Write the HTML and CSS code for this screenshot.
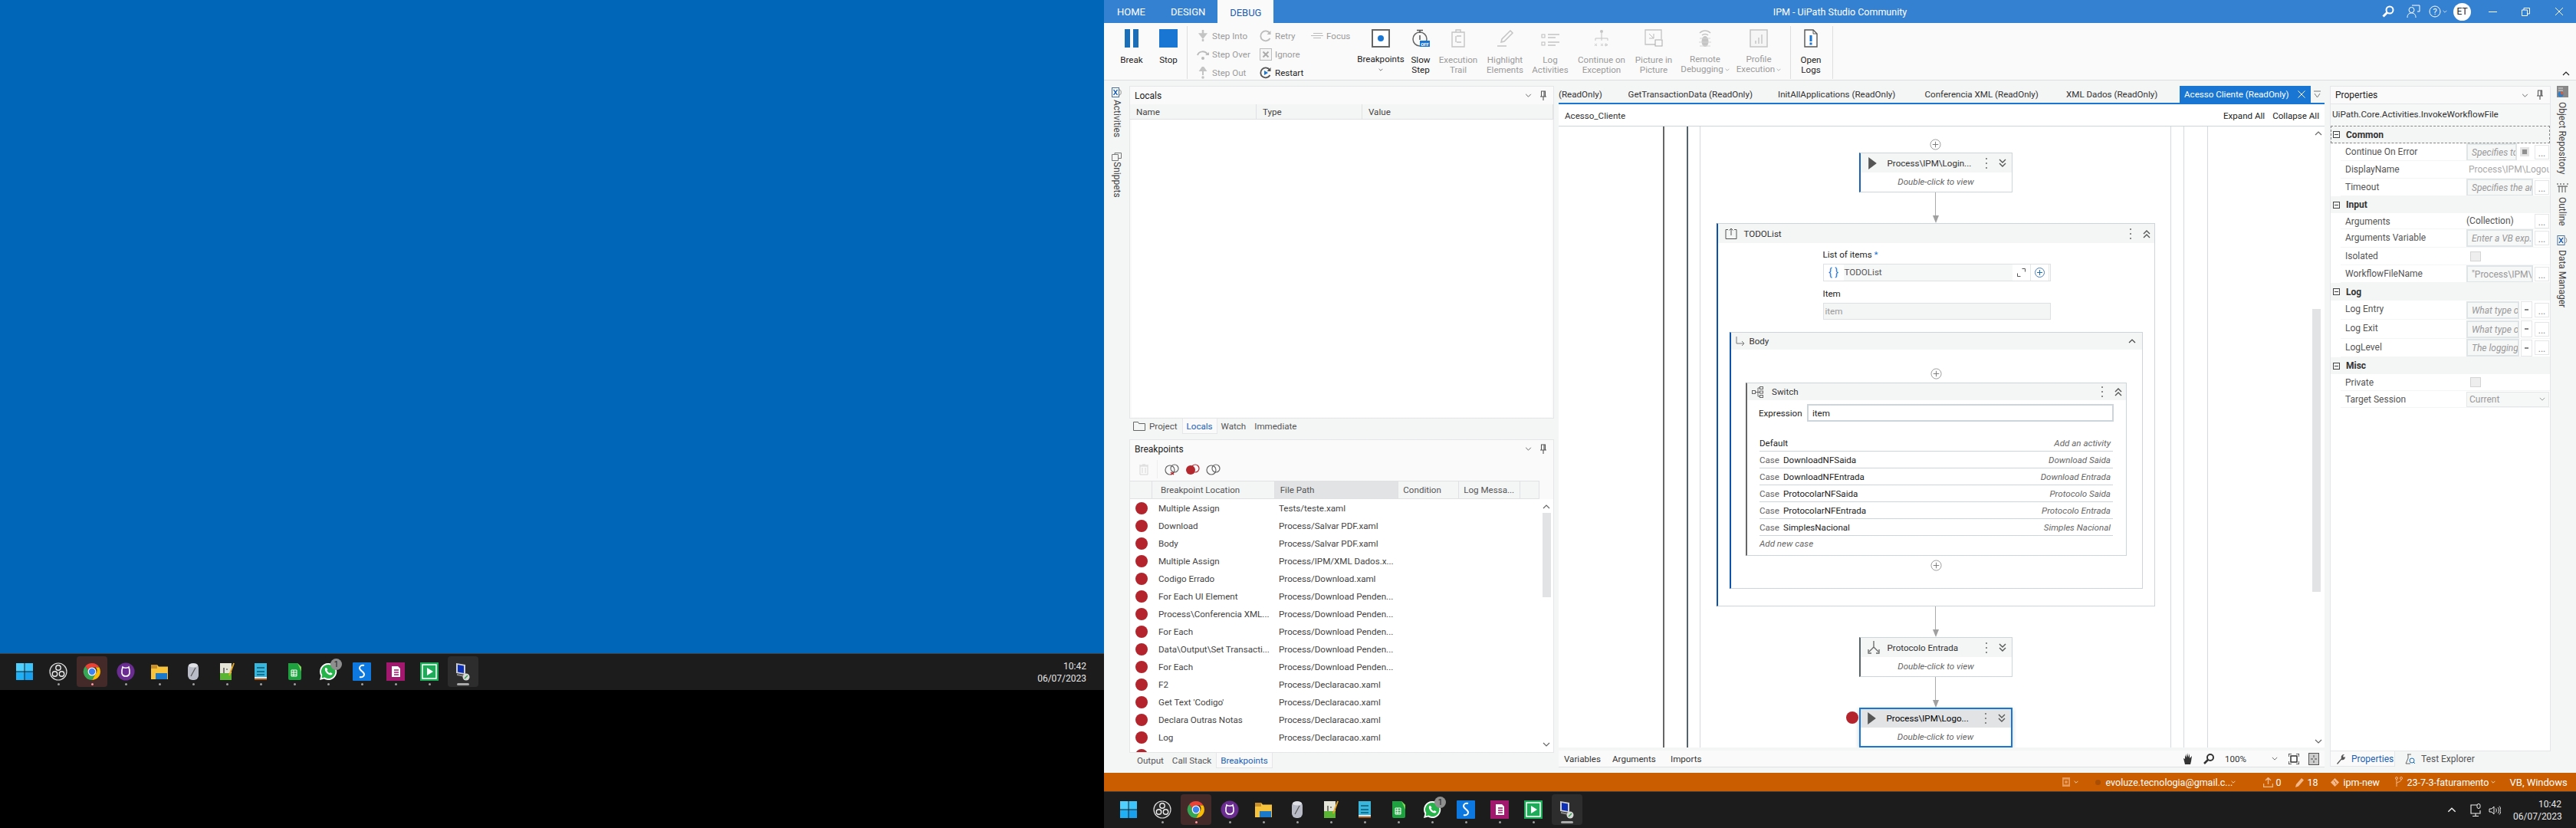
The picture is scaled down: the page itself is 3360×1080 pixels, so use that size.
FILE: index.html
```html
<!DOCTYPE html>
<html lang="en">
  <head>
    <meta charset="UTF-8" />
    <title>IPM - UiPath Studio Community</title>
    <link rel="stylesheet" href="styles.css">
  </head>
  <body>
    <svg class="defs" width="0" height="0">
      <symbol id="t-start" viewBox="0 0 24 24"><rect x="1" y="1" width="10.5" height="10.5" fill="#4fd0ff"/><rect x="12.5" y="1" width="10.5" height="10.5" fill="#3cc4fb"/><rect x="1" y="12.5" width="10.5" height="10.5" fill="#1fb0f5"/><rect x="12.5" y="12.5" width="10.5" height="10.5" fill="#18a0ee"/></symbol>
      <symbol id="t-obs" viewBox="0 0 24 24"><circle cx="12" cy="12" r="11" fill="#2a2a2a" stroke="#ddd" stroke-width="1.2"/><circle cx="12" cy="7" r="3.2" fill="none" stroke="#eee" stroke-width="1.4"/><circle cx="7.5" cy="15" r="3.2" fill="none" stroke="#eee" stroke-width="1.4"/><circle cx="16.5" cy="15" r="3.2" fill="none" stroke="#eee" stroke-width="1.4"/></symbol>
      <symbol id="t-chrome" viewBox="0 0 24 24"><path d="M12 1a11 11 0 0 1 9.5 5.5H12a5.5 5.5 0 0 0-5.2 3.7L3.3 5A11 11 0 0 1 12 1z" fill="#ea4335"/><path d="M21.5 6.5A11 11 0 0 1 12 23l4.7-8.2a5.5 5.5 0 0 0 0-8.3z" fill="#fbbc04"/><path d="M3.3 5a11 11 0 0 0 8.7 18l4.7-8.2a5.5 5.5 0 0 1-9.9-4.6z" fill="#34a853"/><circle cx="12" cy="12" r="5.5" fill="#fff"/><circle cx="12" cy="12" r="4.2" fill="#3f83ef"/></symbol>
      <symbol id="t-github" viewBox="0 0 24 24"><circle cx="12" cy="12" r="11.5" fill="#6b2c91"/><path d="M8 6c-1 3-1.500 5-1 8 .5 3 2.500 4 5 4s4.500-1 5-4c.5-3 0-5-1-8-1 1-2 1.200-4 1.200S9 7 8 6z" fill="none" stroke="#fff" stroke-width="1.6"/></symbol>
      <symbol id="t-folder" viewBox="0 0 24 24"><path d="M1 3h8l2 2.500h12V22H1z" fill="#f8c33c"/><path d="M1 3h8v5H1z" fill="#c9902a"/><rect x="7" y="14" width="15" height="8" fill="#1b79c9"/></symbol>
      <symbol id="t-disk" viewBox="0 0 24 24"><rect x="5" y="1" width="14" height="22" rx="6" fill="#b9bcc6"/><ellipse cx="12" cy="4" rx="6" ry="2.500" fill="#dfe1e6"/><path d="M9 18l6-11" stroke="#555" stroke-width="1.2"/></symbol>
      <symbol id="t-note" viewBox="0 0 24 24"><rect x="3" y="1" width="15" height="22" fill="#e6e6d8"/><rect x="3" y="14" width="15" height="9" fill="#5bb534"/><path d="M21 1l-6 16" stroke="#e6a621" stroke-width="2"/><path d="M8 7v7M11 9h2" stroke="#333" stroke-width="1.200"/></symbol>
      <symbol id="t-pad" viewBox="0 0 24 24"><rect x="4" y="1" width="16" height="22" fill="#3ab5dc"/><rect x="4" y="19" width="16" height="2" fill="#e7e7e7"/><rect x="4" y="21" width="16" height="2" fill="#a65718"/><path d="M7 7h10M7 12h10M7 16h10" stroke="#16708f" stroke-width="2"/></symbol>
      <symbol id="t-calc" viewBox="0 0 24 24"><path d="M4 1h12l5 5v15a2 2 0 0 1-2 2H6a2 2 0 0 1-2-2z" fill="#1ea13f"/><path d="M16 1l5 5v6z" fill="#7ed957"/><path d="M8 10h7v8H8zM8 13h7M8 16h7M11 10v8" stroke="#fff" fill="none"/></symbol>
      <symbol id="t-whats" viewBox="0 0 24 24"><path d="M12 1a11 11 0 0 0-9.500 16.500L1 23l5.700-1.500A11 11 0 1 0 12 1z" fill="#fff"/><path d="M12 3a9 9 0 0 0-7.700 13.600L3.500 20.500l4-1A9 9 0 1 0 12 3z" fill="#25b34a"/><path d="M8.500 7c-1 1-1 3 .5 5.500S13.500 16.500 15.500 16.500c1 0 2-1 2-2l-2.500-1.500-1 1c-1.500-.5-3-2.200-3.500-3.500l1-1L10 7z" fill="#fff"/></symbol>
      <symbol id="t-sync" viewBox="0 0 24 24"><rect x="0" y="0" width="24" height="24" rx="1" fill="#0d79e0"/><path d="M15 4c-3-1-6 .5-6 3.500 0 3 6 5 6 8 0 3-3 4.500-6 3.500" fill="none" stroke="#fff" stroke-width="2"/></symbol>
      <symbol id="t-doc" viewBox="0 0 24 24"><rect x="0" y="0" width="24" height="24" fill="#a3186f"/><path d="M7 5h8l3 3v11H7z" fill="#fff"/><path d="M10 10h6M10 13h6M10 16h6" stroke="#a3186f" stroke-width="1.500"/></symbol>
      <symbol id="t-play" viewBox="0 0 24 24"><rect x="0" y="0" width="24" height="24" fill="#1faa59"/><rect x="3" y="3" width="18" height="18" fill="none" stroke="#fff" stroke-width="1.500"/><path d="M9 7l8 5-8 5z" fill="#fff"/></symbol>
      <symbol id="t-pc" viewBox="0 0 24 24"><path d="M3 1l12 2v13L3 14z" fill="#cfcfcf"/><path d="M5 3l8 1.500v9.500l-8-1.500z" fill="#0c2fb8"/><path d="M4 15l10 2v2L4 17z" fill="#888"/><circle cx="16" cy="19" r="4.500" fill="#d9d9d9"/><path d="M14 21l4-4" stroke="#2e9b45" stroke-width="1.500"/></symbol>
      <symbol id="chev-d" viewBox="0 0 10 6"><path d="M1 1l4 4 4-4" fill="none" stroke="currentColor" stroke-width="1.200"/></symbol>
      <symbol id="chev-u" viewBox="0 0 10 6"><path d="M1 5l4-4 4 4" fill="none" stroke="currentColor" stroke-width="1.200"/></symbol>
      <symbol id="pin" viewBox="0 0 10 14"><path d="M2.500 1h5v7h-5zM1 8h8M5 8v5M6 1v7" fill="none" stroke="#555" stroke-width="1.100"/></symbol>
      <symbol id="plus-c" viewBox="0 0 16 16"><circle cx="8" cy="8" r="7" fill="#fff" stroke="#9a9a9a"/><path d="M8 4v8M4 8h8" stroke="#777"/></symbol>
      <symbol id="dbl-d" viewBox="0 0 12 14"><path d="M2 2l4 4 4-4M2 7l4 4 4-4" fill="none" stroke="#555" stroke-width="1.400"/></symbol>
      <symbol id="dbl-u" viewBox="0 0 12 14"><path d="M2 7l4-4 4 4M2 12l4-4 4 4" fill="none" stroke="#555" stroke-width="1.400"/></symbol>
      <symbol id="dots" viewBox="0 0 4 16"><path d="M2 1v2M2 7v2M2 13v2" stroke="#666" stroke-width="1.500"/></symbol>
      <symbol id="invoke" viewBox="0 0 14 18"><path d="M1 0l12 9-12 9z" fill="#555"/></symbol>
    </svg>

    <!-- monitor 1 -->
    <div class="monitor-left">
      <div class="wallpaper"></div>
      <div class="taskbar">
        <div class="tb-item"><svg class="tb-icon"><use href="#t-start"/></svg></div>
        <div class="tb-item on"><svg class="tb-icon"><use href="#t-obs"/></svg></div>
        <div class="tb-item on chrome"><svg class="tb-icon"><use href="#t-chrome"/></svg></div>
        <div class="tb-item on"><svg class="tb-icon"><use href="#t-github"/></svg></div>
        <div class="tb-item on"><svg class="tb-icon"><use href="#t-folder"/></svg></div>
        <div class="tb-item on"><svg class="tb-icon"><use href="#t-disk"/></svg></div>
        <div class="tb-item on"><svg class="tb-icon"><use href="#t-note"/></svg></div>
        <div class="tb-item on"><svg class="tb-icon"><use href="#t-pad"/></svg></div>
        <div class="tb-item on"><svg class="tb-icon"><use href="#t-calc"/></svg></div>
        <div class="tb-item on"><svg class="tb-icon"><use href="#t-whats"/></svg><span class="tb-badge">1</span></div>
        <div class="tb-item on"><svg class="tb-icon"><use href="#t-sync"/></svg></div>
        <div class="tb-item on"><svg class="tb-icon"><use href="#t-doc"/></svg></div>
        <div class="tb-item on"><svg class="tb-icon"><use href="#t-play"/></svg></div>
        <div class="tb-item on current"><svg class="tb-icon"><use href="#t-pc"/></svg></div>
        <div class="tb-clock left-clock"><div>10:42</div><div>06/07/2023</div></div>
      </div>
      <div class="black"></div>
    </div>

    <!-- monitor 2 -->
    <div class="monitor-right">
      <div class="titlebar">
        <div class="menu">
          <span class="menu-tab home">HOME</span>
          <span class="menu-tab design">DESIGN</span>
          <span class="menu-tab active">DEBUG</span>
        </div>
        <div class="win-title">IPM - UiPath Studio Community</div>
        <div class="win-actions">
          <svg class="wa search" width="18" height="18" viewBox="0 0 18 18"><circle cx="11" cy="7" r="4.500" fill="none" stroke="#fff" stroke-width="2"/><path d="M7.500 10.500L2.500 15.500" stroke="#fff" stroke-width="3"/></svg>
          <svg class="wa person" width="18" height="18" viewBox="0 0 18 18"><circle cx="6.500" cy="7" r="3.500" fill="none" stroke="#fff"/><path d="M1 17c0-4 2-6 5.500-6s5.500 2 5.500 6M7 1h10v8h-3" fill="none" stroke="#fff"/></svg>
          <svg class="wa help" width="16" height="16" viewBox="0 0 16 16"><circle cx="8" cy="8" r="7" fill="none" stroke="#fff"/><text x="8" y="12" class="help-q">?</text></svg>
          <svg class="wa help-chev" width="6" height="4"><use href="#chev-d"/></svg>
          <span class="avatar">ET</span>
          <svg class="wa min" width="11" height="1" viewBox="0 0 11 1"><rect width="11" height="1" fill="#fff"/></svg>
          <svg class="wa restore" width="11" height="11" viewBox="0 0 11 11"><path d="M.5 3h7v7.500h-7zM3 3V.5h7.500V8H8" fill="none" stroke="#fff"/></svg>
          <svg class="wa close" width="12" height="12" viewBox="0 0 12 12"><path d="M1 1l10 10M11 1L1 11" stroke="#fff"/></svg>
        </div>
      </div>

      <div class="ribbon">
        <div class="rb-big w48"><span class="rb-ico"><svg width="18" height="24" viewBox="0 0 18 24"><rect width="7" height="24" fill="#1a6fb8"/><rect x="11" width="7" height="24" fill="#1a6fb8"/></svg></span><span class="rb-lbl">Break</span></div>
        <div class="rb-big w48"><span class="rb-ico"><svg width="24" height="24"><rect width="24" height="24" fill="#1976d2"/></svg></span><span class="rb-lbl">Stop</span></div>
        <div class="rb-sep"></div>
        <div class="rb-col c1">
          <div class="rb-small off"><svg width="16" height="16" viewBox="0 0 16 16"><path d="M8 0v8M4.500 5.500L8 10l3.500-4.500zM8 12v3" stroke="#c4c4c4" stroke-width="2.500" fill="#c4c4c4"/></svg>Step Into</div>
          <div class="rb-small off"><svg width="16" height="16" viewBox="0 0 16 16"><path d="M1 9c2-6 10-6 13-1" fill="none" stroke="#bbb" stroke-width="2"/><path d="M11 9h5V5z" fill="#bbb"/><circle cx="8" cy="13" r="2" fill="#bbb"/></svg>Step Over</div>
          <div class="rb-small off"><svg width="16" height="16" viewBox="0 0 16 16"><path d="M8 11V4M4.500 5L8 0l3.500 5z" stroke="#c4c4c4" stroke-width="2" fill="#c4c4c4"/><circle cx="8" cy="14" r="1.800" fill="#c4c4c4"/></svg>Step Out</div>
        </div>
        <div class="rb-col c2">
          <div class="rb-small off"><svg width="16" height="16" viewBox="0 0 16 16"><path d="M13.500 11A6.500 6.500 0 1 1 13 4" fill="none" stroke="#bbb" stroke-width="1.800"/><path d="M14.500 1v5h-5z" fill="#bbb"/></svg>Retry</div>
          <div class="rb-small off"><svg width="16" height="16" viewBox="0 0 16 16"><rect x=".5" y=".5" width="15" height="15" fill="#f5f5f5" stroke="#bbb"/><path d="M4.500 4.500l7 7M11.500 4.500l-7 7" stroke="#aaa" stroke-width="2"/></svg>Ignore</div>
          <div class="rb-small"><svg width="16" height="16" viewBox="0 0 16 16"><path d="M13.500 11A6.500 6.500 0 1 1 13 4" fill="none" stroke="#555" stroke-width="1.800"/><path d="M14.500 1v5h-5z" fill="#555"/><path d="M6 5l5 3-5 3z" fill="#1976d2"/></svg>Restart</div>
        </div>
        <div class="rb-col c3">
          <div class="rb-small off"><svg width="16" height="8" viewBox="0 0 16 8"><path d="M3 .5h12M0 3.500h16M3 6.500h10" stroke="#bbb"/></svg>Focus</div>
        </div>
        <div class="rb-big w52 lbl-high"><span class="rb-ico"><svg width="24" height="24"><rect x="1" y="1" width="22" height="22" fill="#fff" stroke="#666" stroke-width="2"/><circle cx="12" cy="12" r="4" fill="#1976d2"/></svg></span><span class="rb-lbl">Breakpoints</span><svg class="rb-chev" width="6" height="4"><use href="#chev-d"/></svg></div>
        <div class="rb-big w52"><span class="rb-ico"><svg width="24" height="24" viewBox="0 0 24 24"><circle cx="11" cy="13" r="9" fill="none" stroke="#666" stroke-width="1.500"/><path d="M7 1.500h8M11 2v3M11 8v6" stroke="#555" stroke-width="1.500"/><rect x="11" y="15" width="13" height="8" fill="#1976d2"/><text x="17.500" y="21.500" class="off-txt">OFF</text></svg></span><span class="rb-lbl">Slow<br />Step</span></div>
        <div class="rb-big w46 off"><span class="rb-ico"><svg width="20" height="24" viewBox="0 0 20 24"><path d="M2 4h16v19H2zM7 4V1h6v3M8 9h6M8 17h6M7 9v8" fill="none" stroke="#c4c4c4" stroke-width="1.400"/></svg></span><span class="rb-lbl">Execution<br />Trail</span></div>
        <div class="rb-big w76 off"><span class="rb-ico"><svg width="24" height="24" viewBox="0 0 24 24"><path d="M19 2l3 3-11 11-4 1 1-4zM2 22h12" fill="none" stroke="#c4c4c4" stroke-width="1.500"/></svg></span><span class="rb-lbl">Highlight<br />Elements</span></div>
        <div class="rb-big w42 off"><span class="rb-ico"><svg width="24" height="24" viewBox="0 0 24 24"><path d="M9 7h15M9 11h10M9 17h15M9 21h10" stroke="#c4c4c4" stroke-width="1.300"/><rect x="1" y="7" width="4" height="4" fill="none" stroke="#bbb"/><rect x="1" y="17" width="4" height="4" fill="none" stroke="#bbb"/></svg></span><span class="rb-lbl">Log<br />Activities</span></div>
        <div class="rb-big w92 off"><span class="rb-ico"><svg width="20" height="24" viewBox="0 0 20 24"><circle cx="10" cy="3" r="2" fill="#c4c4c4"/><path d="M10 5v7M2 15v-3h16v3M10 12v3" fill="none" stroke="#c4c4c4"/><path d="M1 19l3 3M4 19l-3 3M9 19l3 3M12 19l-3 3M15 19v3l3-1.500z" stroke="#c4c4c4" fill="none"/></svg></span><span class="rb-lbl">Continue on<br />Exception</span></div>
        <div class="rb-big w44 off"><span class="rb-ico"><svg width="24" height="24" viewBox="0 0 24 24"><path d="M14 20H1V1h21v12" fill="none" stroke="#c4c4c4" stroke-width="1.300"/><rect x="14" y="14" width="9" height="8" fill="none" stroke="#aaa"/><path d="M7 6l6 6M7 12h6V6" transform="translate(-1 0)" fill="none" stroke="#bbb"/></svg></span><span class="rb-lbl">Picture in<br />Picture</span></div>
        <div class="rb-big w90 off lbl-high"><span class="rb-ico"><svg width="20" height="24" viewBox="0 0 20 24"><path d="M3 5c4-4 10-4 14 0M6 8c2-2 6-2 8 0" fill="none" stroke="#c4c4c4" stroke-width="1.500"/><ellipse cx="10" cy="16" rx="4.500" ry="7" fill="#c4c4c4"/><path d="M3 12h14M2 17h16M3 22h14" stroke="#d4d4d4"/></svg></span><span class="rb-lbl">Remote<br />Debugging<svg class="rb-chev-in" width="6" height="4"><use href="#chev-d"/></svg></span></div>
        <div class="rb-big w50 off lbl-high"><span class="rb-ico"><svg width="24" height="24" viewBox="0 0 24 24"><rect x="1" y="1" width="22" height="22" fill="#f5f5f5" stroke="#c4c4c4" stroke-width="1.500"/><path d="M8 19v-4M12 19V11M16 19V7" stroke="#c4c4c4" stroke-width="1.400"/></svg></span><span class="rb-lbl">Profile<br />Execution<svg class="rb-chev-in" width="6" height="4"><use href="#chev-d"/></svg></span></div>
        <div class="rb-sep s2"></div>
        <div class="rb-big w52"><span class="rb-ico"><svg width="18" height="24" viewBox="0 0 18 24"><path d="M1 1h11l5 5v17H1z" fill="#fff" stroke="#555" stroke-width="1.400"/><path d="M12 1v5h5" fill="none" stroke="#555"/><rect x="7.500" y="8" width="3" height="8" fill="#1976d2"/><rect x="7.500" y="17.500" width="3" height="3" fill="#1976d2"/></svg></span><span class="rb-lbl">Open<br />Logs</span></div>
        <div class="rb-sep s3"></div>
        <svg class="rb-collapse" width="10" height="6"><use href="#chev-u"/></svg>
      </div>

      <div class="workspace">
        <div class="side-strip">
          <svg class="side-ico" width="14" height="13" viewBox="0 0 14 13"><rect x=".5" y=".5" width="9" height="12" fill="#fff" stroke="#4a6f96"/><path d="M2.500 3l5 7M7.500 3l-5 7" stroke="#1a5fb4" stroke-width="1.300"/><path d="M10 3c3 0 3 7 0 7" fill="none" stroke="#888"/></svg>
          <span class="side-txt activities">Activities</span>
          <svg class="snip-ico" width="13" height="11" viewBox="0 0 13 11"><path d="M.5 2.500h8v8h-8zM4 2.500V.5h8.500v7h-4" fill="none" stroke="#777"/></svg>
          <span class="side-txt snippets">Snippets</span>
        </div>

        <div class="col-left">
          <div class="panel locals">
            <div class="panel-head"><span class="panel-name">Locals</span><span class="grip"></span><svg class="ph-chev" width="9" height="5"><use href="#chev-d"/></svg><svg class="ph-pin" width="10" height="14"><use href="#pin"/></svg></div>
            <div class="locals-cols"><span class="lc-name">Name</span><span class="lc-type">Type</span><span class="lc-value">Value</span></div>
            <div class="locals-body"></div>
          </div>
          <div class="bottom-tabs">
            <svg class="proj-ico" width="16" height="12" viewBox="0 0 16 12"><path d="M.5 11.500V.5h6l1 2h8v9z" fill="none" stroke="#666"/></svg>
            <span class="bt">Project</span>
            <span class="bt active">Locals</span>
            <span class="bt">Watch</span>
            <span class="bt">Immediate</span>
          </div>
          <div class="panel breakpoints">
            <div class="panel-head"><span class="panel-name">Breakpoints</span><span class="grip"></span><svg class="ph-chev" width="9" height="5"><use href="#chev-d"/></svg><svg class="ph-pin" width="10" height="14"><use href="#pin"/></svg></div>
            <div class="bp-tools">
              <svg width="12" height="15" viewBox="0 0 12 15"><path d="M1 3h10v11H1zM0 2h12M4 1h4M4 5v7M8 5v7" fill="none" stroke="#d6d6d6"/></svg>
              <span class="bp-tool-sep"></span>
              <svg width="19" height="15" viewBox="0 0 19 15"><circle cx="7" cy="8" r="6" fill="none" stroke="#666" stroke-width="1.200"/><circle cx="13" cy="6" r="5" fill="none" stroke="#666" stroke-width="1.200"/><path d="M8 11l4 3M12 11l-4 3" stroke="#c0272d" stroke-width="1.500"/></svg>
              <svg width="19" height="15" viewBox="0 0 19 15"><circle cx="13" cy="6" r="5" fill="none" stroke="#b3272d" stroke-width="1.200"/><circle cx="7" cy="8" r="6" fill="#b3272d"/></svg>
              <svg width="19" height="15" viewBox="0 0 19 15"><circle cx="7" cy="8" r="6" fill="none" stroke="#666" stroke-width="1.200"/><circle cx="13" cy="6" r="5" fill="none" stroke="#666" stroke-width="1.200"/></svg>
            </div>
            <div class="bp-head">
              <span class="bh b0"></span>
              <span class="bh b1">Breakpoint Location</span>
              <span class="bh b2 sorted">File Path</span>
              <span class="bh b3">Condition</span>
              <span class="bh b4">Log Messa...</span>
              <span class="bh b5"></span>
            </div>
            <div class="bp-body">
              <div class="bp-rows">
                <div class="bp-row"><i></i><span class="bp-loc">Multiple Assign</span><span>Tests/teste.xaml</span></div>
                <div class="bp-row"><i></i><span class="bp-loc">Download</span><span>Process/Salvar PDF.xaml</span></div>
                <div class="bp-row"><i></i><span class="bp-loc">Body</span><span>Process/Salvar PDF.xaml</span></div>
                <div class="bp-row"><i></i><span class="bp-loc">Multiple Assign</span><span>Process/IPM/XML Dados.x...</span></div>
                <div class="bp-row"><i></i><span class="bp-loc">Codigo Errado</span><span>Process/Download.xaml</span></div>
                <div class="bp-row"><i></i><span class="bp-loc">For Each UI Element</span><span>Process/Download Penden...</span></div>
                <div class="bp-row"><i></i><span class="bp-loc">Process\Conferencia XML...</span><span>Process/Download Penden...</span></div>
                <div class="bp-row"><i></i><span class="bp-loc">For Each</span><span>Process/Download Penden...</span></div>
                <div class="bp-row"><i></i><span class="bp-loc">Data\Output\Set Transacti...</span><span>Process/Download Penden...</span></div>
                <div class="bp-row"><i></i><span class="bp-loc">For Each</span><span>Process/Download Penden...</span></div>
                <div class="bp-row"><i></i><span class="bp-loc">F2</span><span>Process/Declaracao.xaml</span></div>
                <div class="bp-row"><i></i><span class="bp-loc">Get Text 'Codigo'</span><span>Process/Declaracao.xaml</span></div>
                <div class="bp-row"><i></i><span class="bp-loc">Declara Outras Notas</span><span>Process/Declaracao.xaml</span></div>
                <div class="bp-row"><i></i><span class="bp-loc">Log</span><span>Process/Declaracao.xaml</span></div>
                <div class="bp-row"><i></i><span class="bp-loc">Log</span><span>Process/Declaracao.xaml</span></div>
              </div>
              <div class="bp-scroll">
                <svg width="10" height="6"><use href="#chev-u"/></svg>
                <div class="bp-thumb"></div>
                <svg class="bp-down" width="10" height="6"><use href="#chev-d"/></svg>
              </div>
            </div>
          </div>
          <div class="bottom-tabs lower">
            <span class="bt">Output</span>
            <span class="bt">Call Stack</span>
            <span class="bt active">Breakpoints</span>
          </div>
        </div>

        <div class="col-center">
          <div class="doc-tabs">
            <span class="doc-tab t0">(ReadOnly)</span>
            <span class="doc-tab t1">GetTransactionData (ReadOnly)</span>
            <span class="doc-tab t2">InitAllApplications (ReadOnly)</span>
            <span class="doc-tab t3">Conferencia XML (ReadOnly)</span>
            <span class="doc-tab t4">XML Dados (ReadOnly)</span>
            <span class="doc-tab active">Acesso Cliente (ReadOnly)<svg width="10" height="10" viewBox="0 0 10 10"><path d="M.5.500l9 9M9.500.500l-9 9" stroke="#fff"/></svg></span>
            <svg class="doc-more" width="9" height="11" viewBox="0 0 9 11"><path d="M0 1h9M1 4l3.500 5L8 4" fill="none" stroke="#777"/></svg>
          </div>
          <div class="crumb">
            <span>Acesso_Cliente</span>
            <span class="crumb-right"><span>Expand All</span><span>Collapse All</span></span>
          </div>
          <div class="canvas">
            <div class="canvas-view">
              <div class="scope-a"><div class="scope-b"><div class="scope-c">
                <svg class="plus first" width="15" height="15"><use href="#plus-c"/></svg>
                <div class="node invoke-node">
                  <div class="node-head"><svg class="n-ico" width="13" height="16"><use href="#invoke"/></svg><span class="n-title">Process\IPM\Login...</span><svg class="n-dots" width="4" height="16"><use href="#dots"/></svg><svg class="n-dbl" width="12" height="14"><use href="#dbl-d"/></svg></div>
                  <div class="node-foot">Double-click to view</div>
                </div>
                <div class="arrow"></div>
                <div class="todo">
                  <div class="block-head"><svg class="bh-ico" width="16" height="14" viewBox="0 0 16 14"><path d="M4 1.500H1v12h14v-12h-3" fill="none" stroke="#555"/><path d="M8 9V0M5.500 2.500L8 0l2.500 2.500" fill="none" stroke="#555"/></svg><span class="n-title">TODOList</span><svg class="n-dots" width="4" height="16"><use href="#dots"/></svg><svg class="n-dbl" width="12" height="14"><use href="#dbl-u"/></svg></div>
                  <div class="todo-form">
                    <div class="f-label first">List of items <b>*</b></div>
                    <div class="f-input list">
                      <span class="f-brace">{ }</span>
                      <span class="f-value">TODOList</span>
                      <span class="f-btn"><svg width="11" height="11" viewBox="0 0 11 11"><path d="M6.500.500h4v4M.500 6.500v4h4" fill="none" stroke="#555"/></svg></span>
                      <span class="f-btn"><svg width="13" height="13" viewBox="0 0 13 13"><circle cx="6.500" cy="6.500" r="6" fill="none" stroke="#4a7fb8"/><path d="M6.500 3v7M3 6.500h7" stroke="#1a6fb8"/></svg></span>
                    </div>
                    <div class="f-label">Item</div>
                    <div class="f-input item">item</div>
                  </div>
                  <div class="body-block">
                    <div class="block-head short"><svg class="body-ico" width="12" height="13" viewBox="0 0 12 13"><path d="M1 0v9h10M8 6l3 3-3 3" fill="none" stroke="#777"/></svg><span class="n-title">Body</span><svg class="n-dbl single" width="10" height="6"><use href="#chev-u"/></svg></div>
                    <svg class="plus mid" width="15" height="15"><use href="#plus-c"/></svg>
                    <div class="switch">
                      <div class="block-head"><svg class="sw-ico" width="16" height="15" viewBox="0 0 16 15"><rect x=".5" y="5.500" width="4" height="4" fill="none" stroke="#666"/><path d="M5 7.500h3M8 2v11M8 2h2M8 7.500h2M8 13h2" stroke="#666" fill="none"/><rect x="10.500" y=".5" width="4" height="3" fill="none" stroke="#666"/><rect x="10.500" y="6" width="4" height="3" fill="none" stroke="#666"/><rect x="10.500" y="11.500" width="4" height="3" fill="none" stroke="#666"/></svg><span class="n-title">Switch</span><svg class="n-dots" width="4" height="16"><use href="#dots"/></svg><svg class="n-dbl" width="12" height="14"><use href="#dbl-u"/></svg></div>
                      <div class="sw-expr"><span>Expression</span><div class="sw-input">item</div></div>
                      <div class="sw-rows">
                        <div class="sw-row"><span class="sw-default">Default</span><em>Add an activity</em></div>
                        <div class="sw-row"><span class="sw-case">Case</span><span class="sw-val">DownloadNFSaida</span><em>Download Saida</em></div>
                        <div class="sw-row"><span class="sw-case">Case</span><span class="sw-val">DownloadNFEntrada</span><em>Download Entrada</em></div>
                        <div class="sw-row"><span class="sw-case">Case</span><span class="sw-val">ProtocolarNFSaida</span><em>Protocolo Saida</em></div>
                        <div class="sw-row"><span class="sw-case">Case</span><span class="sw-val">ProtocolarNFEntrada</span><em>Protocolo Entrada</em></div>
                        <div class="sw-row"><span class="sw-case">Case</span><span class="sw-val">SimplesNacional</span><em>Simples Nacional</em></div>
                        <div class="sw-add">Add new case</div>
                      </div>
                    </div>
                    <svg class="plus low" width="15" height="15"><use href="#plus-c"/></svg>
                  </div>
                </div>
                <div class="arrow"></div>
                <div class="node seq-node">
                  <div class="node-head"><svg class="n-ico" width="16" height="17" viewBox="0 0 16 17"><path d="M8 0v8M8 8L2 14M8 8l6 6M1 11v5h4M15 11v5h-4" fill="none" stroke="#666" stroke-width="1.300"/></svg><span class="n-title">Protocolo Entrada</span><svg class="n-dots" width="4" height="16"><use href="#dots"/></svg><svg class="n-dbl" width="12" height="14"><use href="#dbl-d"/></svg></div>
                  <div class="node-foot">Double-click to view</div>
                </div>
                <div class="arrow"></div>
                <div class="node selected">
                  <span class="node-bp"></span>
                  <div class="node-head"><svg class="n-ico" width="13" height="16"><use href="#invoke"/></svg><span class="n-title">Process\IPM\Logo...</span><svg class="n-dots" width="4" height="16"><use href="#dots"/></svg><svg class="n-dbl" width="12" height="14"><use href="#dbl-d"/></svg></div>
                  <div class="node-foot">Double-click to view</div>
                </div>
              </div></div></div>
            </div>
            <div class="canvas-scroll">
              <svg width="10" height="6"><use href="#chev-u"/></svg>
              <div class="canvas-thumb"></div>
              <svg class="cs-down" width="10" height="6"><use href="#chev-d"/></svg>
            </div>
          </div>
          <div class="designer-bar">
            <span class="db-tab variables">Variables</span><span class="db-tab arguments">Arguments</span><span class="db-tab imports">Imports</span>
            <svg class="db-hand" width="14" height="16" viewBox="0 0 14 16"><path d="M3 15L1 7l2 1V3l1.500 3V1L6 6V0l1.500 6 1-5 .8 6L12 4l-1 7-1 4z" fill="#333"/></svg>
            <svg class="db-zoom" width="14" height="14" viewBox="0 0 14 14"><circle cx="9" cy="5" r="4" fill="#fff" stroke="#333" stroke-width="2"/><path d="M6 8l-5 5" stroke="#333" stroke-width="2.500"/></svg>
            <span class="db-pct">100%</span>
            <svg class="db-chev" width="8" height="5"><use href="#chev-d"/></svg>
            <svg class="db-fit" width="14" height="14" viewBox="0 0 14 14"><rect x="3" y="3" width="8" height="8" fill="none" stroke="#333" stroke-width="1.500"/><path d="M0 4V0h4M10 0h4v4M14 10v4h-4M4 14H0v-4" fill="none" stroke="#333" stroke-width="1.500"/></svg>
            <svg class="db-grid" width="14" height="16" viewBox="0 0 14 16"><rect width="14" height="16" fill="#ccc"/><rect x=".5" y=".5" width="13" height="15" fill="none" stroke="#555"/><path d="M7 3v3M7 10v3M3 8h3M8 8h3" stroke="#444"/></svg>
          </div>
        </div>

        <div class="col-props">
          <div class="panel props">
            <div class="panel-head"><span class="panel-name">Properties</span><span class="grip"></span><svg class="ph-chev" width="9" height="5"><use href="#chev-d"/></svg><svg class="ph-pin" width="10" height="14"><use href="#pin"/></svg></div>
            <div class="props-type">UiPath.Core.Activities.InvokeWorkflowFile</div>
            <div class="p-cat focus"><span class="p-box"></span>Common</div>
            <div class="p-row"><span class="p-name">Continue On Error</span><span class="p-val"><span class="p-in w66">Specifies to</span><span class="p-square"></span><span class="p-dots">...</span></span></div>
            <div class="p-row"><span class="p-name">DisplayName</span><span class="p-val plain">Process\IPM\Logout</span></div>
            <div class="p-row"><span class="p-name">Timeout</span><span class="p-val"><span class="p-in w87">Specifies the ar</span><span class="p-dots">...</span></span></div>
            <div class="p-cat h22"><span class="p-box"></span>Input</div>
            <div class="p-row h21"><span class="p-name">Arguments</span><span class="p-val"><span class="p-coll">(Collection)</span><span class="p-dots">...</span></span></div>
            <div class="p-row h24"><span class="p-name">Arguments Variable</span><span class="p-val"><span class="p-in w87">Enter a VB exp.</span><span class="p-dots">...</span></span></div>
            <div class="p-row"><span class="p-name">Isolated</span><span class="p-val"><span class="p-check"></span></span></div>
            <div class="p-row"><span class="p-name">WorkflowFileName</span><span class="p-val"><span class="p-in w87 upright">"Process\IPM\l</span><span class="p-dots">...</span></span></div>
            <div class="p-cat"><span class="p-box"></span>Log</div>
            <div class="p-row h25"><span class="p-name">Log Entry</span><span class="p-val"><span class="p-in w69">What type o</span><span class="p-drop"></span><span class="p-dots">...</span></span></div>
            <div class="p-row h25"><span class="p-name">Log Exit</span><span class="p-val"><span class="p-in w69">What type o</span><span class="p-drop"></span><span class="p-dots">...</span></span></div>
            <div class="p-row h24"><span class="p-name">LogLevel</span><span class="p-val"><span class="p-in w69">The logging</span><span class="p-drop"></span><span class="p-dots">...</span></span></div>
            <div class="p-cat h22"><span class="p-box"></span>Misc</div>
            <div class="p-row h22"><span class="p-name">Private</span><span class="p-val"><span class="p-check"></span></span></div>
            <div class="p-row h22"><span class="p-name">Target Session</span><span class="p-val"><span class="p-select">Current<svg width="8" height="5"><use href="#chev-d"/></svg></span></span></div>
          </div>
          <div class="bottom-tabs lower props-tabs">
            <span class="bt active"><svg width="13" height="14" viewBox="0 0 13 14"><path d="M1 13l6-7c-1-3 1-5 4-5L9 3l1 2 2-1c0 3-2 5-5 4l-5 6z" fill="#555"/></svg>Properties</span>
            <span class="bt"><svg width="14" height="14" viewBox="0 0 14 14"><path d="M3 1h5M4 1v5L1 13h6" fill="none" stroke="#666"/><circle cx="9" cy="9" r="3" fill="none" stroke="#1a6fb8"/><path d="M11 11l2 2" stroke="#1a6fb8"/></svg>Test Explorer</span>
          </div>
        </div>

        <div class="side-strip right">
          <div class="rs-group g1">
            <svg width="15" height="15" viewBox="0 0 15 15"><rect width="15" height="15" fill="#888"/><path d="M2 3h6M2 6h6" stroke="#ddd"/><circle cx="5" cy="11" r="3.500" fill="#2d7fc9"/><path d="M5 7.500a3.500 3.500 0 0 1 3.500 3.500H5z" fill="#e05a2b"/></svg>
            <span class="side-txt">Object Repository</span>
          </div>
          <div class="rs-group g2">
            <svg width="15" height="12" viewBox="0 0 15 12"><path d="M0 1h2M4 1h2M8 1h2M13 1h2M1 4h13M3 4v8M7 4v8M11 4v8" stroke="#777" stroke-width="1.300"/></svg>
            <span class="side-txt">Outline</span>
          </div>
          <div class="rs-group g3">
            <svg width="15" height="13" viewBox="0 0 14 13"><rect x=".5" y=".5" width="9" height="12" fill="#fff" stroke="#4a6f96"/><path d="M2.500 3l5 7M7.500 3l-5 7" stroke="#1a5fb4" stroke-width="1.300"/><path d="M10 3c3 0 3 7 0 7" fill="none" stroke="#888"/></svg>
            <span class="side-txt">Data Manager</span>
          </div>
        </div>
      </div>

      <div class="statusbar">
        <svg class="sb-src" width="10" height="12" viewBox="0 0 10 12"><rect width="10" height="12" fill="#e89a5a"/><rect x="2.500" y="3.500" width="5" height="5" fill="none" stroke="#c95d00" stroke-width="1.500"/></svg>
        <svg class="sb-chev" width="6" height="4"><use href="#chev-d"/></svg>
        <span class="sb-dot"></span>
        <span class="sb-mail">evoluze.tecnologia@gmail.c...</span>
        <svg class="sb-chev" width="6" height="4"><use href="#chev-d"/></svg>
        <svg class="sb-up" width="13" height="13" viewBox="0 0 13 13"><path d="M6.500 9V1M3 4l3.500-3.500L10 4M.5 8v4.500h12V8" fill="none" stroke="#f3b98a" stroke-width="1.400"/></svg>
        <span class="sb-zero">0</span>
        <svg class="sb-pen" width="12" height="13" viewBox="0 0 12 13"><path d="M0 13l1-4 7-8 3 2.500-7 8z" fill="#f3b98a"/></svg>
        <span class="sb-count">18</span>
        <svg class="sb-git" width="11" height="11" viewBox="0 0 11 11"><path d="M5.500 0L11 5.500 5.500 11 0 5.500z" fill="#f3b98a"/><path d="M4 3l3 3v2" stroke="#c95d00" fill="none"/></svg>
        <span class="sb-repo">ipm-new</span>
        <svg class="sb-branch" width="10" height="14" viewBox="0 0 10 14"><circle cx="2" cy="2" r="1.500" fill="none" stroke="#f3b98a"/><circle cx="8" cy="2" r="1.500" fill="none" stroke="#f3b98a"/><path d="M2 4v9M8 4c0 3-6 3-6 5" fill="none" stroke="#f3b98a"/></svg>
        <span class="sb-name">23-7-3-faturamento</span>
        <svg class="sb-chev" width="6" height="4"><use href="#chev-d"/></svg>
        <span class="sb-lang">VB, Windows</span>
      </div>

      <div class="taskbar">
        <div class="tb-item"><svg class="tb-icon"><use href="#t-start"/></svg></div>
        <div class="tb-item on"><svg class="tb-icon"><use href="#t-obs"/></svg></div>
        <div class="tb-item on chrome"><svg class="tb-icon"><use href="#t-chrome"/></svg></div>
        <div class="tb-item on"><svg class="tb-icon"><use href="#t-github"/></svg></div>
        <div class="tb-item on"><svg class="tb-icon"><use href="#t-folder"/></svg></div>
        <div class="tb-item on"><svg class="tb-icon"><use href="#t-disk"/></svg></div>
        <div class="tb-item on"><svg class="tb-icon"><use href="#t-note"/></svg></div>
        <div class="tb-item on"><svg class="tb-icon"><use href="#t-pad"/></svg></div>
        <div class="tb-item on"><svg class="tb-icon"><use href="#t-calc"/></svg></div>
        <div class="tb-item on"><svg class="tb-icon"><use href="#t-whats"/></svg><span class="tb-badge">1</span></div>
        <div class="tb-item on"><svg class="tb-icon"><use href="#t-sync"/></svg></div>
        <div class="tb-item on"><svg class="tb-icon"><use href="#t-doc"/></svg></div>
        <div class="tb-item on"><svg class="tb-icon"><use href="#t-play"/></svg></div>
        <div class="tb-item on current"><svg class="tb-icon"><use href="#t-pc"/></svg></div>
        <div class="tb-tray">
          <svg class="tray-chev" width="12" height="7"><use href="#chev-u"/></svg>
          <svg class="tray-net" width="14" height="18" viewBox="0 0 14 18"><path d="M9 2H1v11h12v-4M7 13v3M3 16.500h8" fill="none" stroke="#eee" stroke-width="1.100"/><rect x="9" y=".5" width="4" height="6" rx="2" fill="none" stroke="#eee"/></svg>
          <svg class="tray-vol" width="16" height="14" viewBox="0 0 16 14"><path d="M1 5h3l3-3v10L4 9H1zM9.500 4.500c1 1.500 1 3.500 0 5M12 3c2 2 2 6 0 8M14 1.500c2.500 3 2.500 8 0 11" fill="none" stroke="#eee"/></svg>
        </div>
        <div class="tb-clock right-clock"><div>10:42</div><div>06/07/2023</div></div>
      </div>
    </div>
  </body>
</html>
```

FILE: styles.css
```css
* {
  margin: 0;
  padding: 0;
  box-sizing: border-box;
}

body {
  width: 3360px;
  height: 1080px;
  overflow: hidden;
  display: flex;
  background-color: black;
  font-family: "Roboto", "Open Sans", sans-serif;
  font-size: 11.6px;
  color: #333;
}

svg {
  flex-shrink: 0;
}

.defs {
  position: absolute;
}

/* monitores */
.monitor-left {
  width: 1440px;
  display: flex;
  flex-direction: column;
}

.wallpaper {
  height: 852px;
  background-color: #0067b8;
}

.black {
  flex: 1;
  background-color: black;
}

.monitor-right {
  width: 1920px;
  display: flex;
  flex-direction: column;
}

/* barra de tarefas */
.taskbar {
  height: 48px;
  flex-shrink: 0;
  display: flex;
  padding: 4px 0 4px 10px;
  background-color: #1c1c1c;
  border-top: 1px solid #404040;
  color: #e6e6e6;
}

.tb-item {
  position: relative;
  width: 40px;
  height: 40px;
  margin: -1px 2px 0;
  border-radius: 4px;
  display: flex;
  flex-direction: column;
  align-items: center;
  padding-top: 8px;
}

.tb-icon {
  width: 24px;
  height: 24px;
}

.tb-item.on::after {
  content: "";
  width: 3px;
  height: 3px;
  margin-top: 3px;
  border-radius: 50%;
  background-color: #a0a0a0;
}

.tb-item.chrome {
  background-color: #452a2a;
}

.tb-item.chrome::after {
  background-color: #ff9aa2;
}

.tb-item.current {
  background-color: #2d2d2d;
}

.tb-item.current::after {
  width: 16px;
  border-radius: 2px;
  background-color: #aaa;
}

.tb-badge {
  position: absolute;
  top: 3px;
  right: 2px;
  width: 15px;
  height: 15px;
  border-radius: 50%;
  background-color: #8f8f8f;
  color: #222;
  font-size: 11px;
  line-height: 15px;
  text-align: center;
}

.tb-clock {
  margin-left: auto;
  text-align: right;
  font-size: 12px;
  line-height: 16px;
  padding-top: 4px;
}

.left-clock {
  padding-right: 23px;
}

.right-clock {
  width: 82px;
  margin-left: 16px;
  padding-right: 19px;
}

.tb-tray {
  margin-left: auto;
  display: flex;
  align-items: center;
  color: #eee;
}

.tray-net {
  margin-left: 18px;
}

.tray-vol {
  margin-left: 10px;
}

/* barra de titulo */
.titlebar {
  height: 30px;
  flex-shrink: 0;
  display: grid;
  grid-template-columns: 1fr auto 1fr;
  align-items: center;
  background-color: #3481d2;
  color: white;
}

.menu {
  display: flex;
  height: 30px;
  align-items: center;
  font-size: 13px;
}

.menu-tab.home {
  margin-left: 17px;
}

.menu-tab.design {
  margin-left: 33px;
}

.menu-tab.active {
  margin-left: 16px;
  width: 73px;
  height: 30px;
  line-height: 33px;
  text-align: center;
  background-color: #fafafa;
  color: #1a5fb4;
}

.win-title {
  font-size: 12.5px;
}

.win-actions {
  display: flex;
  align-items: center;
  justify-content: flex-end;
  padding-right: 16px;
}

.wa.search {
  margin-right: 1px;
}

.wa.person {
  margin-left: 14px;
}

.wa.help {
  margin-left: 11px;
}

.wa.help-chev {
  margin-left: 2px;
  color: white;
}

.avatar {
  width: 23px;
  height: 23px;
  margin-left: 8px;
  border-radius: 50%;
  background-color: white;
  color: #222;
  font-size: 12px;
  line-height: 23px;
  text-align: center;
}

.wa.min {
  margin-left: 23px;
}

.wa.restore {
  margin-left: 32px;
}

.wa.close {
  margin-left: 32px;
}

/* ribbon */
.ribbon {
  height: 75px;
  flex-shrink: 0;
  display: flex;
  position: relative;
  padding-left: 12px;
  background-color: #fafafa;
  border-bottom: 1px solid #dcdedf;
  color: #222;
}

.rb-big {
  display: flex;
  flex-direction: column;
  align-items: center;
  flex-shrink: 0;
  padding-top: 8px;
  line-height: 13px;
  text-align: center;
}

.rb-ico {
  height: 24px;
  display: flex;
  align-items: center;
}

.rb-lbl {
  margin-top: 10px;
  white-space: nowrap;
}

.rb-big.lbl-high .rb-lbl {
  margin-top: 9px;
}

.rb-chev {
  margin-top: 5px;
  color: #444;
}

.rb-chev-in {
  margin-left: 2px;
  vertical-align: 1px;
}

.rb-big.off,
.rb-small.off {
  color: #9b9b9b;
}

.w42 { width: 42px; }
.w44 { width: 44px; }
.w46 { width: 46px; }
.w48 { width: 48px; }
.w50 { width: 50px; }
.w52 { width: 52px; }
.w76 { width: 76px; }
.w90 { width: 90px; }
.w92 { width: 92px; }

.rb-sep {
  width: 1px;
  height: 69px;
  margin-top: 4px;
  background-color: #dedede;
}

.rb-sep.s2 {
  margin-left: 16px;
}

.rb-sep.s3 {
  margin-left: 2px;
}

.rb-col {
  padding-top: 5px;
}

.rb-col.c1 {
  margin-left: 12px;
  width: 82px;
}

.rb-col.c2 {
  width: 67px;
}

.rb-col.c3 {
  width: 65px;
}

.rb-small {
  height: 24px;
  display: flex;
  align-items: center;
  gap: 4px;
  white-space: nowrap;
}

.rb-small svg {
  width: 16px;
}

.rb-collapse {
  position: absolute;
  right: 8px;
  bottom: 5px;
  color: #222;
}

.off-txt {
  font-size: 6px;
  fill: white;
  text-anchor: middle;
  font-weight: bold;
}

.help-q {
  font-size: 11px;
  fill: white;
  text-anchor: middle;
}

/* area de trabalho */
.workspace {
  flex: 1;
  display: flex;
  min-height: 0;
  background-color: #f4f5f5;
}

.side-strip {
  width: 33px;
  flex-shrink: 0;
  display: flex;
  flex-direction: column;
  align-items: center;
  padding-top: 9px;
}

.side-txt {
  writing-mode: vertical-rl;
  white-space: nowrap;
  font-size: 12px;
  color: #444;
}

.side-txt.activities {
  margin-top: 3px;
}

.snip-ico {
  margin-top: 20px;
}

.side-txt.snippets {
  margin-top: 1px;
}

.side-strip.right {
  width: 33px;
  padding-top: 7px;
  align-items: stretch;
}

.rs-group {
  display: flex;
  flex-direction: column;
  align-items: center;
  gap: 6px;
  width: 26px;
  margin-left: 2px;
}

.rs-group.g2 {
  margin-top: 12px;
}

.rs-group.g3 {
  margin-top: 12px;
}

/* paineis */
.col-left {
  width: 554px;
  flex-shrink: 0;
  padding-top: 7px;
  display: flex;
  flex-direction: column;
}

.panel {
  display: flex;
  flex-direction: column;
  border: 1px solid #e4e6e7;
  background-color: #fafafa;
}

.panel-head {
  height: 23px;
  flex-shrink: 0;
  display: flex;
  align-items: center;
  padding: 0 8px 0 6px;
  color: #222;
  font-size: 12px;
}

.grip {
  flex: 1;
  height: 5px;
  margin: 0 8px;
  background-image: radial-gradient(#b8b8b8 0.6px, transparent 0.7px);
  background-size: 2px 2px;
}

.ph-chev {
  margin: 0 10px 0 4px;
  color: #666;
}

.locals {
  height: 434px;
  flex-shrink: 0;
}

.locals-cols {
  height: 20px;
  display: grid;
  grid-template-columns: 165px 138px 1fr;
  align-items: center;
  line-height: 20px;
  background-color: #f4f5f5;
  border-bottom: 1px solid #dfe1e2;
  color: #444;
}

.locals-cols span {
  padding-left: 8px;
  border-right: 1px solid #dfe1e2;
}

.locals-body {
  flex: 1;
  background-color: white;
  margin: 0 2px 1px;
}

.bottom-tabs {
  height: 20px;
  flex-shrink: 0;
  display: flex;
  align-items: stretch;
  padding-left: 5px;
  color: #555;
}

.proj-ico {
  align-self: center;
}

.bt {
  display: flex;
  align-items: center;
  gap: 7px;
  padding: 0 6px 0 5px;
  white-space: nowrap;
}

.bt.active {
  background-color: #fafafa;
  border: 1px solid #e4e6e7;
  border-top: none;
  color: #1a5fb4;
  padding: 0 5px;
}

.breakpoints {
  height: 409px;
  flex-shrink: 0;
  margin-top: 7px;
  overflow: hidden;
}

.bp-tools {
  height: 30px;
  flex-shrink: 0;
  display: flex;
  align-items: center;
  gap: 8px;
  padding-left: 12px;
}

.bp-tool-sep {
  width: 1px;
  height: 24px;
  margin: 0 1px 0 3px;
  background-color: #eee;
}

.bp-head {
  height: 24px;
  flex-shrink: 0;
  display: flex;
  margin-right: 18px;
  border-top: 1px solid #dfe1e2;
  border-bottom: 1px solid #dfe1e2;
  background-color: #f4f5f5;
  color: #555;
  line-height: 22px;
}

.bh {
  border-right: 1px solid #dfe1e2;
  padding-left: 11px;
  white-space: nowrap;
}

.b0 { width: 29px; }
.b1 { width: 160px; }
.b2 { width: 162px; padding-left: 7px; }
.b3 { width: 79px; padding-left: 6px; }
.b4 { width: 80px; padding-left: 6px; }
.b5 { width: 25px; }

.bh.sorted {
  background-color: #e1e3e5;
}

.bp-body {
  flex: 1;
  display: flex;
  min-height: 0;
  background-color: white;
  overflow: hidden;
}

.bp-rows {
  flex: 1;
}

.bp-row {
  height: 23px;
  display: flex;
  align-items: center;
  padding-left: 7px;
  color: #444;
  white-space: nowrap;
}

.bp-row i {
  width: 16px;
  height: 16px;
  border-radius: 50%;
  background-color: #b3242c;
  flex-shrink: 0;
}

.bp-loc {
  width: 157px;
  margin-left: 14px;
}

.bp-scroll {
  width: 18px;
  flex-shrink: 0;
  display: flex;
  flex-direction: column;
  align-items: center;
  padding-top: 7px;
  color: #666;
}

.bp-thumb {
  width: 11px;
  height: 110px;
  margin-top: 5px;
  background-color: #e1e3e5;
}

.bp-down {
  margin-top: auto;
  margin-bottom: 7px;
}

.bottom-tabs.lower .bt {
  height: 20px;
}

/* designer */
.col-center {
  width: 999px;
  flex-shrink: 0;
  margin-left: 6px;
  padding-top: 7px;
  display: flex;
  flex-direction: column;
}

.doc-tabs {
  height: 24px;
  flex-shrink: 0;
  display: flex;
  align-items: stretch;
  border-bottom: 2px solid #1976d2;
  line-height: 22px;
  white-space: nowrap;
  color: #333;
}

.doc-tab.t0 { width: 90.5px; }
.doc-tab.t1 { width: 195.5px; }
.doc-tab.t2 { width: 191.5px; }
.doc-tab.t3 { width: 184.5px; }

.doc-tab.active {
  display: flex;
  align-items: center;
  justify-content: space-between;
  width: 171px;
  margin-left: auto;
  padding: 0 7px 0 6px;
  background-color: #1976d2;
  color: white;
}

.doc-more {
  align-self: center;
  margin: 0 5px 0 4px;
}

.crumb {
  height: 29px;
  flex-shrink: 0;
  display: flex;
  align-items: center;
  justify-content: space-between;
  padding: 2px 7px 0 8px;
  background-color: white;
  border-bottom: 1px solid #ccd5dc;
  color: #333;
}

.crumb-right {
  display: flex;
  gap: 10px;
  color: #222;
}

.canvas {
  flex: 1;
  min-height: 0;
  display: flex;
  background-color: white;
}

.canvas-view {
  flex: 1;
  min-width: 0;
  overflow: hidden;
  padding-left: 136px;
}

.scope-a {
  width: 711px;
  min-height: 100%;
  border-left: 2px solid #666;
  border-right: 1px solid #d3dadf;
  padding-left: 29px;
}

.scope-b {
  width: 649px;
  border-left: 2px solid #55626a;
  border-right: 1px solid #d3dadf;
  padding-left: 15px;
}

.scope-c {
  width: 615px;
  border-left: 1px solid #d3dadf;
  border-right: 1px solid #d3dadf;
  display: flex;
  flex-direction: column;
  align-items: center;
}

.plus.first {
  margin-top: 16px;
  margin-bottom: 3px;
}

.node {
  position: relative;
  width: 200px;
  height: 52px;
  flex-shrink: 0;
  background-color: white;
  border: 1px solid #ccd5dc;
}

.invoke-node {
  border-left: 2px solid #1a62b8;
}

.seq-node {
  border-left: 2px solid #55626a;
}

.node-head,
.block-head {
  height: 25px;
  display: flex;
  align-items: center;
  background-color: #f4f5f5;
  color: #333;
}

.node-head {
  padding: 0 6px 0 9px;
}

.n-ico {
  margin-right: 13px;
}

.seq-node .n-ico {
  margin-right: 10px;
}

.n-title {
  flex: 1;
  white-space: nowrap;
}

.n-dots {
  margin-right: 13px;
}

.node-foot {
  height: 25px;
  line-height: 25px;
  text-align: center;
  font-style: italic;
  color: #666;
}

.arrow {
  width: 10px;
  height: 40px;
  flex-shrink: 0;
  display: flex;
  flex-direction: column;
  align-items: center;
}

.arrow::before {
  content: "";
  flex: 1;
  width: 1px;
  background-color: #aaa;
}

.arrow::after {
  content: "";
  border-left: 4px solid transparent;
  border-right: 4px solid transparent;
  border-top: 10px solid #a0a0a0;
}

.todo {
  width: 572px;
  height: 500px;
  flex-shrink: 0;
  background-color: white;
  border: 1px solid #ccd5dc;
  border-left: 2px solid #0a52ac;
}

.block-head {
  padding: 0 4px 0 9px;
}

.bh-ico {
  margin-right: 9px;
}

.todo-form {
  padding-left: 137px;
  width: 434px;
}

.f-label {
  height: 16px;
  margin-top: 8px;
  line-height: 16px;
  color: #222;
}

.f-label.first {
  margin-top: 7px;
}

.f-label b {
  color: #1976d2;
  font-weight: normal;
}

.f-input {
  margin-top: 4px;
  border: 1px solid #dde1e4;
  background-color: #f4f5f5;
}

.f-input.list {
  height: 23px;
  display: flex;
  align-items: stretch;
  background-color: white;
}

.f-brace {
  width: 26px;
  text-align: center;
  font-size: 14px;
  line-height: 20px;
  color: #1976d2;
}

.f-value {
  width: 220px;
  padding-left: 1px;
  line-height: 21px;
  background-color: #f6f7f7;
  color: #555;
}

.f-btn {
  width: 24px;
  display: flex;
  align-items: center;
  justify-content: center;
  border-right: 1px solid #e4e6e7;
}

.f-input.item {
  height: 22px;
  padding-left: 2px;
  line-height: 20px;
  color: #999;
}

.body-block {
  width: 539px;
  height: 335px;
  margin: 16px 0 0 15px;
  display: flex;
  flex-direction: column;
  align-items: center;
  border: 1px solid #ccd5dc;
  border-left: 2px solid #0a52ac;
}

.body-block .block-head {
  align-self: stretch;
  height: 22px;
  padding-left: 6px;
}

.body-ico {
  margin-right: 6px;
}

.n-dbl.single {
  margin-right: 4px;
  color: #444;
}

.plus.mid {
  margin-top: 24px;
  margin-bottom: 4px;
}

.plus.low {
  margin-top: 5px;
}

.switch {
  width: 497px;
  height: 226px;
  flex-shrink: 0;
  border: 1px solid #ccd5dc;
  border-left: 2px solid #666;
}

.sw-ico {
  margin-right: 10px;
}

.sw-expr {
  display: flex;
  align-items: center;
  gap: 8px;
  height: 23px;
  margin-top: 5px;
  padding-left: 15px;
  color: #222;
}

.sw-expr span {
  width: 55px;
}

.sw-input {
  width: 400px;
  height: 23px;
  padding-left: 5px;
  line-height: 20px;
  border: 2px solid #ccd5dc;
  background-color: white;
}

.sw-rows {
  margin: 17px 17px 0 16px;
}

.sw-row {
  height: 22px;
  display: flex;
  align-items: center;
  padding-right: 3px;
  border-bottom: 1px solid #ccd5dc;
  color: #222;
  white-space: nowrap;
}

.sw-row em {
  margin-left: auto;
  color: #666;
}

.sw-case {
  width: 31px;
  color: #666;
}

.sw-add {
  height: 22px;
  line-height: 20px;
  font-style: italic;
  color: #666;
}

.selected {
  border: 2px solid #1976d2;
  box-shadow: 0 2px 6px rgba(0, 0, 0, 0.2);
}

.selected .node-head {
  background-color: #e2e3e5;
  color: black;
  padding-left: 8px;
  height: 24px;
}

.node-bp {
  position: absolute;
  top: 3px;
  left: -19px;
  width: 16px;
  height: 16px;
  border-radius: 50%;
  background-color: #b3242c;
}

.canvas-scroll {
  width: 16px;
  flex-shrink: 0;
  display: flex;
  flex-direction: column;
  align-items: center;
  padding-top: 6px;
  color: #666;
}

.canvas-thumb {
  width: 11px;
  height: 369px;
  margin-top: 226px;
  margin-right: 5px;
  background-color: #e1e3e5;
}

.cs-down {
  margin-top: auto;
  margin-bottom: 5px;
}

.designer-bar {
  height: 22px;
  flex-shrink: 0;
  display: flex;
  align-items: center;
  margin: 4px 0 7px;
  padding-right: 7px;
  background-color: #fafafa;
  border-bottom: 1px solid #dfe1e2;
  color: #333;
}

.db-tab.variables { width: 63px; margin-left: 7px; }
.db-tab.arguments { width: 76px; }

.db-hand { margin-left: auto; }
.db-zoom { margin-left: 13px; }
.db-pct { margin-left: 14px; width: 26px; white-space: nowrap; }
.db-chev { margin-left: 35px; color: #666; }
.db-fit { margin-left: 14px; }
.db-grid { margin-left: 12px; }

/* propriedades */
.col-props {
  width: 288px;
  flex-shrink: 0;
  margin-left: 7px;
  padding-top: 7px;
  font-size: 12px;
  display: flex;
  flex-direction: column;
}

.props {
  height: 868px;
  flex-shrink: 0;
  background-color: white;
  border-color: #e4e6e7;
}

.props .panel-head {
  background-color: #fafafa;
  border-bottom: 1px solid #e4e6e7;
}

.props-type {
  height: 28px;
  flex-shrink: 0;
  line-height: 26px;
  padding-left: 2px;
  font-size: 11.7px;
  white-space: nowrap;
  background-color: #f6f7f7;
  color: #333;
}

.p-cat {
  height: 23px;
  flex-shrink: 0;
  display: flex;
  align-items: center;
  background-color: #f4f5f5;
  color: #333;
  font-weight: 700;
}

.p-cat.h22 { height: 22px; }

.p-cat.focus {
  outline: 1px dashed #888;
  outline-offset: -1px;
}

.p-box {
  width: 9px;
  height: 9px;
  margin: 0 8px 0 3px;
  border: 1px solid #444;
  background: linear-gradient(#444, #444) center / 5px 1px no-repeat;
}

.p-row {
  height: 23px;
  flex-shrink: 0;
  display: flex;
  align-items: stretch;
  margin-left: 13px;
  border-bottom: 1px solid #f4f5f5;
}

.p-row.h21 { height: 21px; }
.p-row.h22 { height: 22px; }
.p-row.h24 { height: 24px; }
.p-row.h25 { height: 25px; }

.p-name {
  width: 164px;
  padding-left: 6px;
  line-height: 22px;
  color: #555;
  white-space: nowrap;
}

.p-val {
  width: 108px;
  display: flex;
  align-items: center;
  overflow: hidden;
  white-space: nowrap;
  color: #555;
}

.p-val.plain {
  padding-left: 3px;
  color: #aaa;
}

.p-in {
  flex-shrink: 0;
  height: 23px;
  padding-left: 5px;
  line-height: 20px;
  overflow: hidden;
  font-style: italic;
  color: #999;
  border: 2px solid #dfe4e7;
  background-color: #f6f7f7;
}

.p-in.w66 { width: 66px; }
.p-in.w69 { width: 69px; }
.p-in.w87 { width: 87px; }

.p-in.upright {
  font-style: normal;
}

.p-square {
  width: 12px;
  height: 12px;
  margin: 0 7px 0 4px;
  border: 2px solid #e4e4e4;
  background-color: #8f8f8f;
  box-shadow: inset 0 0 0 1px #ddd;
}

.p-dots {
  width: 19px;
  height: 19px;
  margin-left: auto;
  text-align: center;
  line-height: 20px;
  color: #888;
  border: 1px solid #e4e6e7;
}

.p-coll {
  width: 87px;
}

.p-check {
  width: 14px;
  height: 13px;
  margin-left: 5px;
  background-color: #eee;
  border: 1px solid #d4d4d4;
}

.p-drop {
  width: 15px;
  height: 22px;
  margin-left: 2px;
  border: 1px solid #e4e6e7;
  background: linear-gradient(#888, #888) center / 5px 2px no-repeat;
}

.p-select {
  width: 108px;
  height: 20px;
  display: flex;
  align-items: center;
  justify-content: space-between;
  padding: 0 4px 0 3px;
  color: #999;
  background-color: #f6f7f7;
  border: 1px solid #e4e6e7;
}

.props-tabs {
  padding-left: 0;
}

.props-tabs .bt.active {
  width: 85px;
  padding: 0 0 0 7px;
}

.props-tabs .bt {
  padding-left: 13px;
}

/* barra de status */
.statusbar {
  height: 24px;
  flex-shrink: 0;
  display: flex;
  align-items: center;
  padding-left: 1250px;
  background-color: #c95d00;
  color: white;
  font-size: 12.5px;
  white-space: nowrap;
}

.sb-chev {
  margin-left: 5px;
  color: white;
}

.sb-dot {
  width: 7px;
  height: 7px;
  margin-left: 21.5px;
  border-radius: 50%;
  background-color: #a84e05;
}

.sb-mail { width: 158px; margin-left: 7px; }
.sb-up { margin-left: 36.5px; }
.sb-zero { width: 10px; margin-left: 3.5px; }
.sb-pen { margin-left: 15px; }
.sb-count { width: 16px; margin-left: 4px; }
.sb-git { margin-left: 14.5px; }
.sb-repo { width: 48px; margin-left: 5.5px; }
.sb-branch { margin-left: 19px; }
.sb-name { width: 104px; margin-left: 6px; }
.sb-lang { margin-left: 19px; font-size: 13px; }
```
